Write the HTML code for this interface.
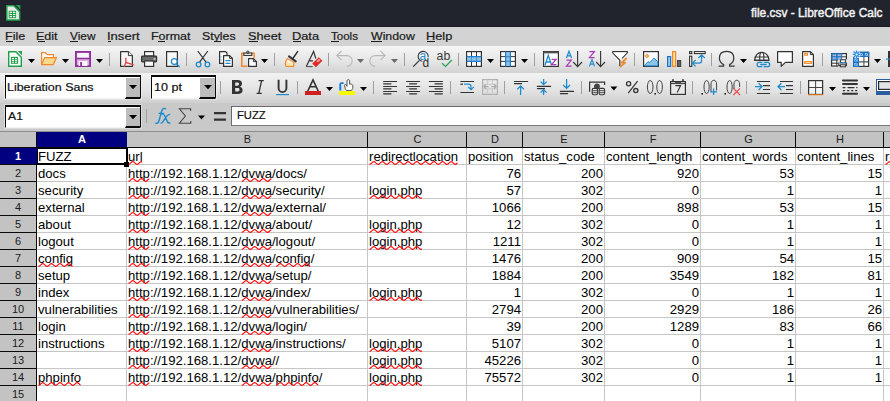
<!DOCTYPE html>
<html><head><meta charset="utf-8">
<style>
*{margin:0;padding:0;box-sizing:border-box}
html,body{width:890px;height:401px;overflow:hidden;background:#fff}
body{position:relative;font-family:"Liberation Sans",sans-serif}
.a{position:absolute}
.t{position:absolute;white-space:nowrap}
.menu{position:absolute;top:29px;font-size:12px;color:#1a1a1a;line-height:14px}
.menu u{text-decoration:none;border-bottom:1px solid #1a1a1a}
.cell{position:absolute;font-size:13.15px;line-height:16px;white-space:nowrap;color:#000;overflow:visible}
.num{text-align:right}
.rh{position:absolute;left:0;width:36px;height:16px;text-align:center;font-size:12px;line-height:16px;color:#222;background:#c0c0c0}
.ch{position:absolute;top:131px;height:16px;text-align:center;font-size:12px;line-height:16px;color:#222;background:#c0c0c0}
</style></head><body>

<div class="a" style="left:0;top:0;width:890px;height:27px;background:#21242d"></div>
<div class="a" style="left:0;top:26px;width:890px;height:1px;background:#17191f"></div>
<div class="t" style="left:751.30px;top:3px;font-size:12px;font-weight:normal;line-height:20px;color:#f2f2f2;transform:scaleX(0.9924);transform-origin:0 0;-webkit-text-stroke:0.45px #f2f2f2">file.csv - LibreOffice Calc</div>
<div class="a" style="left:0;top:27px;width:890px;height:19px;background:#d3d3d3"></div>
<div class="t" style="left:5.06px;top:26px;font-size:11px;font-weight:normal;line-height:20px;color:#1a1a1a;transform:scaleX(1.1438);transform-origin:0 0;-webkit-text-stroke:0.2px #1a1a1a">File</div>
<div class="a" style="left:6px;top:41px;width:7px;height:1px;background:#1a1a1a"></div>
<div class="t" style="left:36.36px;top:26px;font-size:11px;font-weight:normal;line-height:20px;color:#1a1a1a;transform:scaleX(1.1389);transform-origin:0 0;-webkit-text-stroke:0.2px #1a1a1a">Edit</div>
<div class="a" style="left:38px;top:41px;width:7px;height:1px;background:#1a1a1a"></div>
<div class="t" style="left:69.80px;top:26px;font-size:11px;font-weight:normal;line-height:20px;color:#1a1a1a;transform:scaleX(1.0750);transform-origin:0 0;-webkit-text-stroke:0.2px #1a1a1a">View</div>
<div class="a" style="left:70px;top:41px;width:8px;height:1px;background:#1a1a1a"></div>
<div class="t" style="left:106.81px;top:26px;font-size:11px;font-weight:normal;line-height:20px;color:#1a1a1a;transform:scaleX(1.1852);transform-origin:0 0;-webkit-text-stroke:0.2px #1a1a1a">Insert</div>
<div class="a" style="left:108px;top:41px;width:3px;height:1px;background:#1a1a1a"></div>
<div class="t" style="left:151.37px;top:26px;font-size:11px;font-weight:normal;line-height:20px;color:#1a1a1a;transform:scaleX(1.1324);transform-origin:0 0;-webkit-text-stroke:0.2px #1a1a1a">Format</div>
<div class="a" style="left:158px;top:41px;width:7px;height:1px;background:#1a1a1a"></div>
<div class="t" style="left:202.28px;top:26px;font-size:11px;font-weight:normal;line-height:20px;color:#1a1a1a;transform:scaleX(1.1241);transform-origin:0 0;-webkit-text-stroke:0.2px #1a1a1a">Styles</div>
<div class="a" style="left:214px;top:41px;width:7px;height:1px;background:#1a1a1a"></div>
<div class="t" style="left:247.84px;top:26px;font-size:11px;font-weight:normal;line-height:20px;color:#1a1a1a;transform:scaleX(1.1607);transform-origin:0 0;-webkit-text-stroke:0.2px #1a1a1a">Sheet</div>
<div class="a" style="left:249px;top:41px;width:9px;height:1px;background:#1a1a1a"></div>
<div class="t" style="left:291.64px;top:26px;font-size:11px;font-weight:normal;line-height:20px;color:#1a1a1a;transform:scaleX(1.1636);transform-origin:0 0;-webkit-text-stroke:0.2px #1a1a1a">Data</div>
<div class="a" style="left:293px;top:41px;width:8px;height:1px;background:#1a1a1a"></div>
<div class="t" style="left:331.00px;top:26px;font-size:11px;font-weight:normal;line-height:20px;color:#1a1a1a;transform:scaleX(1.0500);transform-origin:0 0;-webkit-text-stroke:0.2px #1a1a1a">Tools</div>
<div class="a" style="left:331px;top:41px;width:8px;height:1px;background:#1a1a1a"></div>
<div class="t" style="left:371.00px;top:26px;font-size:11px;font-weight:normal;line-height:20px;color:#1a1a1a;transform:scaleX(1.1205);transform-origin:0 0;-webkit-text-stroke:0.2px #1a1a1a">Window</div>
<div class="a" style="left:371px;top:41px;width:11px;height:1px;background:#1a1a1a"></div>
<div class="t" style="left:425.84px;top:26px;font-size:11px;font-weight:normal;line-height:20px;color:#1a1a1a;transform:scaleX(1.1619);transform-origin:0 0;-webkit-text-stroke:0.2px #1a1a1a">Help</div>
<div class="a" style="left:427px;top:41px;width:8px;height:1px;background:#1a1a1a"></div>
<div class="a" style="left:0;top:46px;width:890px;height:27px;background:linear-gradient(#f6f6f6,#e4e4e4 60%,#d2d2d2)"></div>
<div class="a" style="left:0;top:73px;width:890px;height:30px;background:linear-gradient(#f2f2f2,#e2e2e2 60%,#cfcfcf)"></div>
<div class="a" style="left:0;top:103px;width:890px;height:28px;background:#c9c9c9"></div>
<div class="a" style="left:4px;top:74px;width:138px;height:26px;background:rgba(255,255,255,0.35)"></div>
<div class="a" style="left:5px;top:75px;width:136px;height:24px;background:#fff;border-top:2px solid #0a0a0a;border-left:1px solid #0a0a0a;border-right:1px solid #0a0a0a;border-bottom:1px solid #f2f2f2"></div>
<div class="a" style="left:125px;top:77px;width:15px;height:22px;background:#bdbdbd;border-left:1px solid #fff;border-top:1px solid #fff;border-bottom:2px solid #0a0a0a"></div>
<svg class="a" style="left:129.0px;top:85.0px" width="8" height="5"><path d="M0 0H8L4 4.2Z" fill="#000"/></svg>
<div class="t" style="left:7.27px;top:77px;font-size:11px;font-weight:normal;line-height:20px;color:#111;transform:scaleX(1.1320);transform-origin:0 0;-webkit-text-stroke:0.2px #111">Liberation Sans</div>
<div class="a" style="left:150px;top:74px;width:67px;height:26px;background:rgba(255,255,255,0.35)"></div>
<div class="a" style="left:151px;top:75px;width:65px;height:24px;background:#fff;border-top:2px solid #0a0a0a;border-left:1px solid #0a0a0a;border-right:1px solid #0a0a0a;border-bottom:1px solid #f2f2f2"></div>
<div class="a" style="left:199px;top:77px;width:16px;height:22px;background:#bdbdbd;border-left:1px solid #fff;border-top:1px solid #fff;border-bottom:2px solid #0a0a0a"></div>
<svg class="a" style="left:203.5px;top:85.0px" width="8" height="5"><path d="M0 0H8L4 4.2Z" fill="#000"/></svg>
<div class="t" style="left:154.45px;top:77px;font-size:11px;font-weight:normal;line-height:20px;color:#111;transform:scaleX(1.1458);transform-origin:0 0;-webkit-text-stroke:0.2px #111">10 pt</div>
<div class="a" style="left:4px;top:104px;width:138px;height:25px;background:rgba(255,255,255,0.35)"></div>
<div class="a" style="left:5px;top:105px;width:136px;height:23px;background:#fff;border-top:2px solid #0a0a0a;border-left:1px solid #0a0a0a;border-right:1px solid #0a0a0a;border-bottom:1px solid #f2f2f2"></div>
<div class="a" style="left:125px;top:107px;width:15px;height:21px;background:#bdbdbd;border-left:1px solid #fff;border-top:1px solid #fff;border-bottom:2px solid #0a0a0a"></div>
<svg class="a" style="left:129.0px;top:114.5px" width="8" height="5"><path d="M0 0H8L4 4.2Z" fill="#000"/></svg>
<div class="t" style="left:7.80px;top:106px;font-size:11px;font-weight:normal;line-height:20px;color:#111;transform:scaleX(1.1077);transform-origin:0 0;-webkit-text-stroke:0.2px #111">A1</div>
<div class="a" style="left:231px;top:106px;width:659px;height:20px;background:#fff;border-top:1px solid #6a6a6a;border-left:1px solid #6a6a6a;border-bottom:1px solid #7a7a7a"></div>
<div class="t" style="left:236.58px;top:105px;font-size:11px;font-weight:normal;line-height:20px;color:#111;transform:scaleX(1.0185);transform-origin:0 0;-webkit-text-stroke:0.2px #111">FUZZ</div>
<div class="a" style="left:0;top:131px;width:890px;height:1px;background:#8e8e8e"></div>
<div class="a" style="left:0;top:132px;width:890px;height:15px;background:#c3c3c3"></div>
<div class="a" style="left:0;top:147px;width:36px;height:254px;background:#c3c3c3"></div>
<div class="a" style="left:36px;top:147px;width:854px;height:1px;background:#c6c6c6"></div>
<div class="a" style="left:36px;top:164px;width:854px;height:1px;background:#c6c6c6"></div>
<div class="a" style="left:36px;top:181px;width:854px;height:1px;background:#c6c6c6"></div>
<div class="a" style="left:36px;top:198px;width:854px;height:1px;background:#c6c6c6"></div>
<div class="a" style="left:36px;top:215px;width:854px;height:1px;background:#c6c6c6"></div>
<div class="a" style="left:36px;top:232px;width:854px;height:1px;background:#c6c6c6"></div>
<div class="a" style="left:36px;top:249px;width:854px;height:1px;background:#c6c6c6"></div>
<div class="a" style="left:36px;top:266px;width:854px;height:1px;background:#c6c6c6"></div>
<div class="a" style="left:36px;top:283px;width:854px;height:1px;background:#c6c6c6"></div>
<div class="a" style="left:36px;top:300px;width:854px;height:1px;background:#c6c6c6"></div>
<div class="a" style="left:36px;top:317px;width:854px;height:1px;background:#c6c6c6"></div>
<div class="a" style="left:36px;top:334px;width:854px;height:1px;background:#c6c6c6"></div>
<div class="a" style="left:36px;top:351px;width:854px;height:1px;background:#c6c6c6"></div>
<div class="a" style="left:36px;top:368px;width:854px;height:1px;background:#c6c6c6"></div>
<div class="a" style="left:36px;top:385px;width:854px;height:1px;background:#c6c6c6"></div>
<div class="a" style="left:36px;top:147px;width:1px;height:254px;background:#c6c6c6"></div>
<div class="a" style="left:126px;top:147px;width:1px;height:254px;background:#c6c6c6"></div>
<div class="a" style="left:367px;top:147px;width:1px;height:254px;background:#c6c6c6"></div>
<div class="a" style="left:466px;top:147px;width:1px;height:254px;background:#c6c6c6"></div>
<div class="a" style="left:522px;top:147px;width:1px;height:254px;background:#c6c6c6"></div>
<div class="a" style="left:604px;top:147px;width:1px;height:254px;background:#c6c6c6"></div>
<div class="a" style="left:700px;top:147px;width:1px;height:254px;background:#c6c6c6"></div>
<div class="a" style="left:795px;top:147px;width:1px;height:254px;background:#c6c6c6"></div>
<div class="a" style="left:883px;top:147px;width:1px;height:254px;background:#c6c6c6"></div>
<div class="a" style="left:0;top:147px;width:890px;height:1px;background:#0a0a0a"></div>
<div class="a" style="left:36px;top:132px;width:1px;height:269px;background:#0a0a0a"></div>
<div class="a" style="left:126px;top:132px;width:1px;height:15px;background:#0a0a0a"></div>
<div class="a" style="left:367px;top:132px;width:1px;height:15px;background:#0a0a0a"></div>
<div class="a" style="left:466px;top:132px;width:1px;height:15px;background:#0a0a0a"></div>
<div class="a" style="left:522px;top:132px;width:1px;height:15px;background:#0a0a0a"></div>
<div class="a" style="left:604px;top:132px;width:1px;height:15px;background:#0a0a0a"></div>
<div class="a" style="left:700px;top:132px;width:1px;height:15px;background:#0a0a0a"></div>
<div class="a" style="left:795px;top:132px;width:1px;height:15px;background:#0a0a0a"></div>
<div class="a" style="left:883px;top:132px;width:1px;height:15px;background:#0a0a0a"></div>
<div class="a" style="left:0;top:164px;width:36px;height:1px;background:#0a0a0a"></div>
<div class="a" style="left:0;top:181px;width:36px;height:1px;background:#0a0a0a"></div>
<div class="a" style="left:0;top:198px;width:36px;height:1px;background:#0a0a0a"></div>
<div class="a" style="left:0;top:215px;width:36px;height:1px;background:#0a0a0a"></div>
<div class="a" style="left:0;top:232px;width:36px;height:1px;background:#0a0a0a"></div>
<div class="a" style="left:0;top:249px;width:36px;height:1px;background:#0a0a0a"></div>
<div class="a" style="left:0;top:266px;width:36px;height:1px;background:#0a0a0a"></div>
<div class="a" style="left:0;top:283px;width:36px;height:1px;background:#0a0a0a"></div>
<div class="a" style="left:0;top:300px;width:36px;height:1px;background:#0a0a0a"></div>
<div class="a" style="left:0;top:317px;width:36px;height:1px;background:#0a0a0a"></div>
<div class="a" style="left:0;top:334px;width:36px;height:1px;background:#0a0a0a"></div>
<div class="a" style="left:0;top:351px;width:36px;height:1px;background:#0a0a0a"></div>
<div class="a" style="left:0;top:368px;width:36px;height:1px;background:#0a0a0a"></div>
<div class="a" style="left:0;top:385px;width:36px;height:1px;background:#0a0a0a"></div>
<div class="a" style="left:37px;top:132px;width:90px;height:15px;background:#000080"></div>
<div class="a" style="left:0;top:148px;width:37px;height:16px;background:#000080"></div>
<div class="t" style="left:37px;top:130px;width:90px;text-align:center;font-size:11px;line-height:18px;color:#fff;font-weight:bold">A</div>
<div class="t" style="left:127px;top:130px;width:241px;text-align:center;font-size:11px;line-height:18px;color:#1a1a1a">B</div>
<div class="t" style="left:368px;top:130px;width:99px;text-align:center;font-size:11px;line-height:18px;color:#1a1a1a">C</div>
<div class="t" style="left:467px;top:130px;width:56px;text-align:center;font-size:11px;line-height:18px;color:#1a1a1a">D</div>
<div class="t" style="left:523px;top:130px;width:82px;text-align:center;font-size:11px;line-height:18px;color:#1a1a1a">E</div>
<div class="t" style="left:605px;top:130px;width:96px;text-align:center;font-size:11px;line-height:18px;color:#1a1a1a">F</div>
<div class="t" style="left:701px;top:130px;width:95px;text-align:center;font-size:11px;line-height:18px;color:#1a1a1a">G</div>
<div class="t" style="left:796px;top:130px;width:88px;text-align:center;font-size:11px;line-height:18px;color:#1a1a1a">H</div>
<div class="t" style="left:884px;top:130px;width:87px;text-align:center;font-size:11px;line-height:18px;color:#1a1a1a">I</div>
<div class="t" style="left:0px;top:148px;width:36px;text-align:center;font-size:11px;line-height:17px;color:#fff;font-weight:bold">1</div>
<div class="t" style="left:0px;top:165px;width:36px;text-align:center;font-size:11px;line-height:17px;color:#1a1a1a">2</div>
<div class="t" style="left:0px;top:182px;width:36px;text-align:center;font-size:11px;line-height:17px;color:#1a1a1a">3</div>
<div class="t" style="left:0px;top:199px;width:36px;text-align:center;font-size:11px;line-height:17px;color:#1a1a1a">4</div>
<div class="t" style="left:0px;top:216px;width:36px;text-align:center;font-size:11px;line-height:17px;color:#1a1a1a">5</div>
<div class="t" style="left:0px;top:233px;width:36px;text-align:center;font-size:11px;line-height:17px;color:#1a1a1a">6</div>
<div class="t" style="left:0px;top:250px;width:36px;text-align:center;font-size:11px;line-height:17px;color:#1a1a1a">7</div>
<div class="t" style="left:0px;top:267px;width:36px;text-align:center;font-size:11px;line-height:17px;color:#1a1a1a">8</div>
<div class="t" style="left:0px;top:284px;width:36px;text-align:center;font-size:11px;line-height:17px;color:#1a1a1a">9</div>
<div class="t" style="left:0px;top:301px;width:36px;text-align:center;font-size:11px;line-height:17px;color:#1a1a1a">10</div>
<div class="t" style="left:0px;top:318px;width:36px;text-align:center;font-size:11px;line-height:17px;color:#1a1a1a">11</div>
<div class="t" style="left:0px;top:335px;width:36px;text-align:center;font-size:11px;line-height:17px;color:#1a1a1a">12</div>
<div class="t" style="left:0px;top:352px;width:36px;text-align:center;font-size:11px;line-height:17px;color:#1a1a1a">13</div>
<div class="t" style="left:0px;top:369px;width:36px;text-align:center;font-size:11px;line-height:17px;color:#1a1a1a">14</div>
<div class="t" style="left:0px;top:386px;width:36px;text-align:center;font-size:11px;line-height:17px;color:#1a1a1a">15</div>
<div class="cell" style="left:38px;top:149px">FUZZ</div>
<div class="cell" style="left:128px;top:149px"><span class="sp">url</span></div>
<div class="cell" style="left:369px;top:149px"><span class="sp">redirectlocation</span></div>
<div class="cell" style="left:468px;top:149px">position</div>
<div class="cell" style="left:524px;top:149px">status_code</div>
<div class="cell" style="left:606px;top:149px">content_length</div>
<div class="cell" style="left:702px;top:149px">content_words</div>
<div class="cell" style="left:797px;top:149px">content_lines</div>
<div class="cell" style="left:38px;top:166px">docs</div>
<div class="cell" style="left:128px;top:166px"><span class="sp">http</span>://192.168.1.12/<span class="sp">dvwa</span>/docs/</div>
<div class="cell num" style="left:466px;top:166px;width:55px">76</div>
<div class="cell num" style="left:522px;top:166px;width:81px">200</div>
<div class="cell num" style="left:604px;top:166px;width:95px">920</div>
<div class="cell num" style="left:700px;top:166px;width:94px">53</div>
<div class="cell num" style="left:795px;top:166px;width:87px">15</div>
<div class="cell" style="left:38px;top:183px">security</div>
<div class="cell" style="left:128px;top:183px"><span class="sp">http</span>://192.168.1.12/<span class="sp">dvwa</span>/security/</div>
<div class="cell" style="left:369px;top:183px"><span class="sp">login.php</span></div>
<div class="cell num" style="left:466px;top:183px;width:55px">57</div>
<div class="cell num" style="left:522px;top:183px;width:81px">302</div>
<div class="cell num" style="left:604px;top:183px;width:95px">0</div>
<div class="cell num" style="left:700px;top:183px;width:94px">1</div>
<div class="cell num" style="left:795px;top:183px;width:87px">1</div>
<div class="cell" style="left:38px;top:200px">external</div>
<div class="cell" style="left:128px;top:200px"><span class="sp">http</span>://192.168.1.12/<span class="sp">dvwa</span>/external/</div>
<div class="cell num" style="left:466px;top:200px;width:55px">1066</div>
<div class="cell num" style="left:522px;top:200px;width:81px">200</div>
<div class="cell num" style="left:604px;top:200px;width:95px">898</div>
<div class="cell num" style="left:700px;top:200px;width:94px">53</div>
<div class="cell num" style="left:795px;top:200px;width:87px">15</div>
<div class="cell" style="left:38px;top:217px">about</div>
<div class="cell" style="left:128px;top:217px"><span class="sp">http</span>://192.168.1.12/<span class="sp">dvwa</span>/about/</div>
<div class="cell" style="left:369px;top:217px"><span class="sp">login.php</span></div>
<div class="cell num" style="left:466px;top:217px;width:55px">12</div>
<div class="cell num" style="left:522px;top:217px;width:81px">302</div>
<div class="cell num" style="left:604px;top:217px;width:95px">0</div>
<div class="cell num" style="left:700px;top:217px;width:94px">1</div>
<div class="cell num" style="left:795px;top:217px;width:87px">1</div>
<div class="cell" style="left:38px;top:234px">logout</div>
<div class="cell" style="left:128px;top:234px"><span class="sp">http</span>://192.168.1.12/<span class="sp">dvwa</span>/logout/</div>
<div class="cell" style="left:369px;top:234px"><span class="sp">login.php</span></div>
<div class="cell num" style="left:466px;top:234px;width:55px">1211</div>
<div class="cell num" style="left:522px;top:234px;width:81px">302</div>
<div class="cell num" style="left:604px;top:234px;width:95px">0</div>
<div class="cell num" style="left:700px;top:234px;width:94px">1</div>
<div class="cell num" style="left:795px;top:234px;width:87px">1</div>
<div class="cell" style="left:38px;top:251px"><span class="sp">config</span></div>
<div class="cell" style="left:128px;top:251px"><span class="sp">http</span>://192.168.1.12/<span class="sp">dvwa</span>/<span class="sp">config</span>/</div>
<div class="cell num" style="left:466px;top:251px;width:55px">1476</div>
<div class="cell num" style="left:522px;top:251px;width:81px">200</div>
<div class="cell num" style="left:604px;top:251px;width:95px">909</div>
<div class="cell num" style="left:700px;top:251px;width:94px">54</div>
<div class="cell num" style="left:795px;top:251px;width:87px">15</div>
<div class="cell" style="left:38px;top:268px">setup</div>
<div class="cell" style="left:128px;top:268px"><span class="sp">http</span>://192.168.1.12/<span class="sp">dvwa</span>/setup/</div>
<div class="cell num" style="left:466px;top:268px;width:55px">1884</div>
<div class="cell num" style="left:522px;top:268px;width:81px">200</div>
<div class="cell num" style="left:604px;top:268px;width:95px">3549</div>
<div class="cell num" style="left:700px;top:268px;width:94px">182</div>
<div class="cell num" style="left:795px;top:268px;width:87px">81</div>
<div class="cell" style="left:38px;top:285px">index</div>
<div class="cell" style="left:128px;top:285px"><span class="sp">http</span>://192.168.1.12/<span class="sp">dvwa</span>/index/</div>
<div class="cell" style="left:369px;top:285px"><span class="sp">login.php</span></div>
<div class="cell num" style="left:466px;top:285px;width:55px">1</div>
<div class="cell num" style="left:522px;top:285px;width:81px">302</div>
<div class="cell num" style="left:604px;top:285px;width:95px">0</div>
<div class="cell num" style="left:700px;top:285px;width:94px">1</div>
<div class="cell num" style="left:795px;top:285px;width:87px">1</div>
<div class="cell" style="left:38px;top:302px">vulnerabilities</div>
<div class="cell" style="left:128px;top:302px"><span class="sp">http</span>://192.168.1.12/<span class="sp">dvwa</span>/vulnerabilities/</div>
<div class="cell num" style="left:466px;top:302px;width:55px">2794</div>
<div class="cell num" style="left:522px;top:302px;width:81px">200</div>
<div class="cell num" style="left:604px;top:302px;width:95px">2929</div>
<div class="cell num" style="left:700px;top:302px;width:94px">186</div>
<div class="cell num" style="left:795px;top:302px;width:87px">26</div>
<div class="cell" style="left:38px;top:319px">login</div>
<div class="cell" style="left:128px;top:319px"><span class="sp">http</span>://192.168.1.12/<span class="sp">dvwa</span>/login/</div>
<div class="cell num" style="left:466px;top:319px;width:55px">39</div>
<div class="cell num" style="left:522px;top:319px;width:81px">200</div>
<div class="cell num" style="left:604px;top:319px;width:95px">1289</div>
<div class="cell num" style="left:700px;top:319px;width:94px">83</div>
<div class="cell num" style="left:795px;top:319px;width:87px">66</div>
<div class="cell" style="left:38px;top:336px">instructions</div>
<div class="cell" style="left:128px;top:336px"><span class="sp">http</span>://192.168.1.12/<span class="sp">dvwa</span>/instructions/</div>
<div class="cell" style="left:369px;top:336px"><span class="sp">login.php</span></div>
<div class="cell num" style="left:466px;top:336px;width:55px">5107</div>
<div class="cell num" style="left:522px;top:336px;width:81px">302</div>
<div class="cell num" style="left:604px;top:336px;width:95px">0</div>
<div class="cell num" style="left:700px;top:336px;width:94px">1</div>
<div class="cell num" style="left:795px;top:336px;width:87px">1</div>
<div class="cell" style="left:128px;top:353px"><span class="sp">http</span>://192.168.1.12/<span class="sp">dvwa</span>//</div>
<div class="cell" style="left:369px;top:353px"><span class="sp">login.php</span></div>
<div class="cell num" style="left:466px;top:353px;width:55px">45226</div>
<div class="cell num" style="left:522px;top:353px;width:81px">302</div>
<div class="cell num" style="left:604px;top:353px;width:95px">0</div>
<div class="cell num" style="left:700px;top:353px;width:94px">1</div>
<div class="cell num" style="left:795px;top:353px;width:87px">1</div>
<div class="cell" style="left:38px;top:370px"><span class="sp">phpinfo</span></div>
<div class="cell" style="left:128px;top:370px"><span class="sp">http</span>://192.168.1.12/<span class="sp">dvwa</span>/<span class="sp">phpinfo</span>/</div>
<div class="cell" style="left:369px;top:370px"><span class="sp">login.php</span></div>
<div class="cell num" style="left:466px;top:370px;width:55px">75572</div>
<div class="cell num" style="left:522px;top:370px;width:81px">302</div>
<div class="cell num" style="left:604px;top:370px;width:95px">0</div>
<div class="cell num" style="left:700px;top:370px;width:94px">1</div>
<div class="cell num" style="left:795px;top:370px;width:87px">1</div>
<div class="cell" style="left:885px;top:149px"><span class="sp">redirectchain</span></div>
<div class="a" style="left:37px;top:148px;width:91px;height:17px;border-top:1px solid #000;border-left:1px solid #000;border-right:2px solid #000;border-bottom:2px solid #000"></div>
<div class="a" style="left:124px;top:162px;width:5px;height:5px;background:#000"></div>
<svg class="a" style="left:0;top:0" width="890" height="401">
<path d="M128.50 164.40 C130.65 164.40 130.65 161.60 132.80 161.60 C134.95 161.60 134.95 164.40 137.10 164.40 C139.25 164.40 139.25 161.60 141.40 161.60 C141.75 161.60 141.75 162.06 142.11 162.06" fill="none" stroke="#ff0000" stroke-width="1.2"/>
<path d="M369.50 164.40 C371.65 164.40 371.65 161.60 373.80 161.60 C375.95 161.60 375.95 164.40 378.10 164.40 C380.25 164.40 380.25 161.60 382.40 161.60 C384.55 161.60 384.55 164.40 386.70 164.40 C388.85 164.40 388.85 161.60 391.00 161.60 C393.15 161.60 393.15 164.40 395.30 164.40 C397.45 164.40 397.45 161.60 399.60 161.60 C401.75 161.60 401.75 164.40 403.90 164.40 C406.05 164.40 406.05 161.60 408.20 161.60 C410.35 161.60 410.35 164.40 412.50 164.40 C414.65 164.40 414.65 161.60 416.80 161.60 C418.95 161.60 418.95 164.40 421.10 164.40 C423.25 164.40 423.25 161.60 425.40 161.60 C427.55 161.60 427.55 164.40 429.70 164.40 C431.85 164.40 431.85 161.60 434.00 161.60 C436.15 161.60 436.15 164.40 438.30 164.40 C440.45 164.40 440.45 161.60 442.60 161.60 C444.75 161.60 444.75 164.40 446.90 164.40 C449.05 164.40 449.05 161.60 451.20 161.60 C453.35 161.60 453.35 164.40 455.50 164.40 C456.56 164.40 456.56 163.02 457.62 163.02" fill="none" stroke="#ff0000" stroke-width="1.2"/>
<path d="M128.50 181.40 C130.65 181.40 130.65 178.60 132.80 178.60 C134.95 178.60 134.95 181.40 137.10 181.40 C139.25 181.40 139.25 178.60 141.40 178.60 C143.55 178.60 143.55 181.40 145.70 181.40 C147.56 181.40 147.56 178.98 149.42 178.98" fill="none" stroke="#ff0000" stroke-width="1.2"/>
<path d="M241.77 181.40 C243.92 181.40 243.92 178.60 246.07 178.60 C248.22 178.60 248.22 181.40 250.37 181.40 C252.52 181.40 252.52 178.60 254.67 178.60 C256.82 178.60 256.82 181.40 258.97 181.40 C261.12 181.40 261.12 178.60 263.27 178.60 C265.42 178.60 265.42 181.40 267.57 181.40 C269.51 181.40 269.51 178.87 271.45 178.87" fill="none" stroke="#ff0000" stroke-width="1.2"/>
<path d="M128.50 198.40 C130.65 198.40 130.65 195.60 132.80 195.60 C134.95 195.60 134.95 198.40 137.10 198.40 C139.25 198.40 139.25 195.60 141.40 195.60 C143.55 195.60 143.55 198.40 145.70 198.40 C147.56 198.40 147.56 195.98 149.42 195.98" fill="none" stroke="#ff0000" stroke-width="1.2"/>
<path d="M241.77 198.40 C243.92 198.40 243.92 195.60 246.07 195.60 C248.22 195.60 248.22 198.40 250.37 198.40 C252.52 198.40 252.52 195.60 254.67 195.60 C256.82 195.60 256.82 198.40 258.97 198.40 C261.12 198.40 261.12 195.60 263.27 195.60 C265.42 195.60 265.42 198.40 267.57 198.40 C269.51 198.40 269.51 195.87 271.45 195.87" fill="none" stroke="#ff0000" stroke-width="1.2"/>
<path d="M369.50 198.40 C371.65 198.40 371.65 195.60 373.80 195.60 C375.95 195.60 375.95 198.40 378.10 198.40 C380.25 198.40 380.25 195.60 382.40 195.60 C384.55 195.60 384.55 198.40 386.70 198.40 C388.85 198.40 388.85 195.60 391.00 195.60 C393.15 195.60 393.15 198.40 395.30 198.40 C397.45 198.40 397.45 195.60 399.60 195.60 C401.75 195.60 401.75 198.40 403.90 198.40 C406.05 198.40 406.05 195.60 408.20 195.60 C410.35 195.60 410.35 198.40 412.50 198.40 C414.65 198.40 414.65 195.60 416.80 195.60 C418.95 195.60 418.95 198.40 421.10 198.40 C421.47 198.40 421.47 197.92 421.84 197.92" fill="none" stroke="#ff0000" stroke-width="1.2"/>
<path d="M128.50 215.40 C130.65 215.40 130.65 212.60 132.80 212.60 C134.95 212.60 134.95 215.40 137.10 215.40 C139.25 215.40 139.25 212.60 141.40 212.60 C143.55 212.60 143.55 215.40 145.70 215.40 C147.56 215.40 147.56 212.98 149.42 212.98" fill="none" stroke="#ff0000" stroke-width="1.2"/>
<path d="M241.77 215.40 C243.92 215.40 243.92 212.60 246.07 212.60 C248.22 212.60 248.22 215.40 250.37 215.40 C252.52 215.40 252.52 212.60 254.67 212.60 C256.82 212.60 256.82 215.40 258.97 215.40 C261.12 215.40 261.12 212.60 263.27 212.60 C265.42 212.60 265.42 215.40 267.57 215.40 C269.51 215.40 269.51 212.87 271.45 212.87" fill="none" stroke="#ff0000" stroke-width="1.2"/>
<path d="M128.50 232.40 C130.65 232.40 130.65 229.60 132.80 229.60 C134.95 229.60 134.95 232.40 137.10 232.40 C139.25 232.40 139.25 229.60 141.40 229.60 C143.55 229.60 143.55 232.40 145.70 232.40 C147.56 232.40 147.56 229.98 149.42 229.98" fill="none" stroke="#ff0000" stroke-width="1.2"/>
<path d="M241.77 232.40 C243.92 232.40 243.92 229.60 246.07 229.60 C248.22 229.60 248.22 232.40 250.37 232.40 C252.52 232.40 252.52 229.60 254.67 229.60 C256.82 229.60 256.82 232.40 258.97 232.40 C261.12 232.40 261.12 229.60 263.27 229.60 C265.42 229.60 265.42 232.40 267.57 232.40 C269.51 232.40 269.51 229.87 271.45 229.87" fill="none" stroke="#ff0000" stroke-width="1.2"/>
<path d="M369.50 232.40 C371.65 232.40 371.65 229.60 373.80 229.60 C375.95 229.60 375.95 232.40 378.10 232.40 C380.25 232.40 380.25 229.60 382.40 229.60 C384.55 229.60 384.55 232.40 386.70 232.40 C388.85 232.40 388.85 229.60 391.00 229.60 C393.15 229.60 393.15 232.40 395.30 232.40 C397.45 232.40 397.45 229.60 399.60 229.60 C401.75 229.60 401.75 232.40 403.90 232.40 C406.05 232.40 406.05 229.60 408.20 229.60 C410.35 229.60 410.35 232.40 412.50 232.40 C414.65 232.40 414.65 229.60 416.80 229.60 C418.95 229.60 418.95 232.40 421.10 232.40 C421.47 232.40 421.47 231.92 421.84 231.92" fill="none" stroke="#ff0000" stroke-width="1.2"/>
<path d="M128.50 249.40 C130.65 249.40 130.65 246.60 132.80 246.60 C134.95 246.60 134.95 249.40 137.10 249.40 C139.25 249.40 139.25 246.60 141.40 246.60 C143.55 246.60 143.55 249.40 145.70 249.40 C147.56 249.40 147.56 246.98 149.42 246.98" fill="none" stroke="#ff0000" stroke-width="1.2"/>
<path d="M241.77 249.40 C243.92 249.40 243.92 246.60 246.07 246.60 C248.22 246.60 248.22 249.40 250.37 249.40 C252.52 249.40 252.52 246.60 254.67 246.60 C256.82 246.60 256.82 249.40 258.97 249.40 C261.12 249.40 261.12 246.60 263.27 246.60 C265.42 246.60 265.42 249.40 267.57 249.40 C269.51 249.40 269.51 246.87 271.45 246.87" fill="none" stroke="#ff0000" stroke-width="1.2"/>
<path d="M369.50 249.40 C371.65 249.40 371.65 246.60 373.80 246.60 C375.95 246.60 375.95 249.40 378.10 249.40 C380.25 249.40 380.25 246.60 382.40 246.60 C384.55 246.60 384.55 249.40 386.70 249.40 C388.85 249.40 388.85 246.60 391.00 246.60 C393.15 246.60 393.15 249.40 395.30 249.40 C397.45 249.40 397.45 246.60 399.60 246.60 C401.75 246.60 401.75 249.40 403.90 249.40 C406.05 249.40 406.05 246.60 408.20 246.60 C410.35 246.60 410.35 249.40 412.50 249.40 C414.65 249.40 414.65 246.60 416.80 246.60 C418.95 246.60 418.95 249.40 421.10 249.40 C421.47 249.40 421.47 248.92 421.84 248.92" fill="none" stroke="#ff0000" stroke-width="1.2"/>
<path d="M38.50 266.40 C40.65 266.40 40.65 263.60 42.80 263.60 C44.95 263.60 44.95 266.40 47.10 266.40 C49.25 266.40 49.25 263.60 51.40 263.60 C53.55 263.60 53.55 266.40 55.70 266.40 C57.85 266.40 57.85 263.60 60.00 263.60 C62.15 263.60 62.15 266.40 64.30 266.40 C66.45 266.40 66.45 263.60 68.60 263.60 C70.59 263.60 70.59 266.19 72.58 266.19" fill="none" stroke="#ff0000" stroke-width="1.2"/>
<path d="M128.50 266.40 C130.65 266.40 130.65 263.60 132.80 263.60 C134.95 263.60 134.95 266.40 137.10 266.40 C139.25 266.40 139.25 263.60 141.40 263.60 C143.55 263.60 143.55 266.40 145.70 266.40 C147.56 266.40 147.56 263.98 149.42 263.98" fill="none" stroke="#ff0000" stroke-width="1.2"/>
<path d="M241.77 266.40 C243.92 266.40 243.92 263.60 246.07 263.60 C248.22 263.60 248.22 266.40 250.37 266.40 C252.52 266.40 252.52 263.60 254.67 263.60 C256.82 263.60 256.82 266.40 258.97 266.40 C261.12 266.40 261.12 263.60 263.27 263.60 C265.42 263.60 265.42 266.40 267.57 266.40 C269.51 266.40 269.51 263.87 271.45 263.87" fill="none" stroke="#ff0000" stroke-width="1.2"/>
<path d="M276.11 266.40 C278.26 266.40 278.26 263.60 280.41 263.60 C282.56 263.60 282.56 266.40 284.71 266.40 C286.86 266.40 286.86 263.60 289.01 263.60 C291.16 263.60 291.16 266.40 293.31 266.40 C295.46 266.40 295.46 263.60 297.61 263.60 C299.76 263.60 299.76 266.40 301.91 266.40 C304.06 266.40 304.06 263.60 306.21 263.60 C308.20 263.60 308.20 266.19 310.19 266.19" fill="none" stroke="#ff0000" stroke-width="1.2"/>
<path d="M128.50 283.40 C130.65 283.40 130.65 280.60 132.80 280.60 C134.95 280.60 134.95 283.40 137.10 283.40 C139.25 283.40 139.25 280.60 141.40 280.60 C143.55 280.60 143.55 283.40 145.70 283.40 C147.56 283.40 147.56 280.98 149.42 280.98" fill="none" stroke="#ff0000" stroke-width="1.2"/>
<path d="M241.77 283.40 C243.92 283.40 243.92 280.60 246.07 280.60 C248.22 280.60 248.22 283.40 250.37 283.40 C252.52 283.40 252.52 280.60 254.67 280.60 C256.82 280.60 256.82 283.40 258.97 283.40 C261.12 283.40 261.12 280.60 263.27 280.60 C265.42 280.60 265.42 283.40 267.57 283.40 C269.51 283.40 269.51 280.87 271.45 280.87" fill="none" stroke="#ff0000" stroke-width="1.2"/>
<path d="M128.50 300.40 C130.65 300.40 130.65 297.60 132.80 297.60 C134.95 297.60 134.95 300.40 137.10 300.40 C139.25 300.40 139.25 297.60 141.40 297.60 C143.55 297.60 143.55 300.40 145.70 300.40 C147.56 300.40 147.56 297.98 149.42 297.98" fill="none" stroke="#ff0000" stroke-width="1.2"/>
<path d="M241.77 300.40 C243.92 300.40 243.92 297.60 246.07 297.60 C248.22 297.60 248.22 300.40 250.37 300.40 C252.52 300.40 252.52 297.60 254.67 297.60 C256.82 297.60 256.82 300.40 258.97 300.40 C261.12 300.40 261.12 297.60 263.27 297.60 C265.42 297.60 265.42 300.40 267.57 300.40 C269.51 300.40 269.51 297.87 271.45 297.87" fill="none" stroke="#ff0000" stroke-width="1.2"/>
<path d="M369.50 300.40 C371.65 300.40 371.65 297.60 373.80 297.60 C375.95 297.60 375.95 300.40 378.10 300.40 C380.25 300.40 380.25 297.60 382.40 297.60 C384.55 297.60 384.55 300.40 386.70 300.40 C388.85 300.40 388.85 297.60 391.00 297.60 C393.15 297.60 393.15 300.40 395.30 300.40 C397.45 300.40 397.45 297.60 399.60 297.60 C401.75 297.60 401.75 300.40 403.90 300.40 C406.05 300.40 406.05 297.60 408.20 297.60 C410.35 297.60 410.35 300.40 412.50 300.40 C414.65 300.40 414.65 297.60 416.80 297.60 C418.95 297.60 418.95 300.40 421.10 300.40 C421.47 300.40 421.47 299.92 421.84 299.92" fill="none" stroke="#ff0000" stroke-width="1.2"/>
<path d="M128.50 317.40 C130.65 317.40 130.65 314.60 132.80 314.60 C134.95 314.60 134.95 317.40 137.10 317.40 C139.25 317.40 139.25 314.60 141.40 314.60 C143.55 314.60 143.55 317.40 145.70 317.40 C147.56 317.40 147.56 314.98 149.42 314.98" fill="none" stroke="#ff0000" stroke-width="1.2"/>
<path d="M241.77 317.40 C243.92 317.40 243.92 314.60 246.07 314.60 C248.22 314.60 248.22 317.40 250.37 317.40 C252.52 317.40 252.52 314.60 254.67 314.60 C256.82 314.60 256.82 317.40 258.97 317.40 C261.12 317.40 261.12 314.60 263.27 314.60 C265.42 314.60 265.42 317.40 267.57 317.40 C269.51 317.40 269.51 314.87 271.45 314.87" fill="none" stroke="#ff0000" stroke-width="1.2"/>
<path d="M128.50 334.40 C130.65 334.40 130.65 331.60 132.80 331.60 C134.95 331.60 134.95 334.40 137.10 334.40 C139.25 334.40 139.25 331.60 141.40 331.60 C143.55 331.60 143.55 334.40 145.70 334.40 C147.56 334.40 147.56 331.98 149.42 331.98" fill="none" stroke="#ff0000" stroke-width="1.2"/>
<path d="M241.77 334.40 C243.92 334.40 243.92 331.60 246.07 331.60 C248.22 331.60 248.22 334.40 250.37 334.40 C252.52 334.40 252.52 331.60 254.67 331.60 C256.82 331.60 256.82 334.40 258.97 334.40 C261.12 334.40 261.12 331.60 263.27 331.60 C265.42 331.60 265.42 334.40 267.57 334.40 C269.51 334.40 269.51 331.87 271.45 331.87" fill="none" stroke="#ff0000" stroke-width="1.2"/>
<path d="M128.50 351.40 C130.65 351.40 130.65 348.60 132.80 348.60 C134.95 348.60 134.95 351.40 137.10 351.40 C139.25 351.40 139.25 348.60 141.40 348.60 C143.55 348.60 143.55 351.40 145.70 351.40 C147.56 351.40 147.56 348.98 149.42 348.98" fill="none" stroke="#ff0000" stroke-width="1.2"/>
<path d="M241.77 351.40 C243.92 351.40 243.92 348.60 246.07 348.60 C248.22 348.60 248.22 351.40 250.37 351.40 C252.52 351.40 252.52 348.60 254.67 348.60 C256.82 348.60 256.82 351.40 258.97 351.40 C261.12 351.40 261.12 348.60 263.27 348.60 C265.42 348.60 265.42 351.40 267.57 351.40 C269.51 351.40 269.51 348.87 271.45 348.87" fill="none" stroke="#ff0000" stroke-width="1.2"/>
<path d="M369.50 351.40 C371.65 351.40 371.65 348.60 373.80 348.60 C375.95 348.60 375.95 351.40 378.10 351.40 C380.25 351.40 380.25 348.60 382.40 348.60 C384.55 348.60 384.55 351.40 386.70 351.40 C388.85 351.40 388.85 348.60 391.00 348.60 C393.15 348.60 393.15 351.40 395.30 351.40 C397.45 351.40 397.45 348.60 399.60 348.60 C401.75 348.60 401.75 351.40 403.90 351.40 C406.05 351.40 406.05 348.60 408.20 348.60 C410.35 348.60 410.35 351.40 412.50 351.40 C414.65 351.40 414.65 348.60 416.80 348.60 C418.95 348.60 418.95 351.40 421.10 351.40 C421.47 351.40 421.47 350.92 421.84 350.92" fill="none" stroke="#ff0000" stroke-width="1.2"/>
<path d="M128.50 368.40 C130.65 368.40 130.65 365.60 132.80 365.60 C134.95 365.60 134.95 368.40 137.10 368.40 C139.25 368.40 139.25 365.60 141.40 365.60 C143.55 365.60 143.55 368.40 145.70 368.40 C147.56 368.40 147.56 365.98 149.42 365.98" fill="none" stroke="#ff0000" stroke-width="1.2"/>
<path d="M241.77 368.40 C243.92 368.40 243.92 365.60 246.07 365.60 C248.22 365.60 248.22 368.40 250.37 368.40 C252.52 368.40 252.52 365.60 254.67 365.60 C256.82 365.60 256.82 368.40 258.97 368.40 C261.12 368.40 261.12 365.60 263.27 365.60 C265.42 365.60 265.42 368.40 267.57 368.40 C269.51 368.40 269.51 365.87 271.45 365.87" fill="none" stroke="#ff0000" stroke-width="1.2"/>
<path d="M369.50 368.40 C371.65 368.40 371.65 365.60 373.80 365.60 C375.95 365.60 375.95 368.40 378.10 368.40 C380.25 368.40 380.25 365.60 382.40 365.60 C384.55 365.60 384.55 368.40 386.70 368.40 C388.85 368.40 388.85 365.60 391.00 365.60 C393.15 365.60 393.15 368.40 395.30 368.40 C397.45 368.40 397.45 365.60 399.60 365.60 C401.75 365.60 401.75 368.40 403.90 368.40 C406.05 368.40 406.05 365.60 408.20 365.60 C410.35 365.60 410.35 368.40 412.50 368.40 C414.65 368.40 414.65 365.60 416.80 365.60 C418.95 365.60 418.95 368.40 421.10 368.40 C421.47 368.40 421.47 367.92 421.84 367.92" fill="none" stroke="#ff0000" stroke-width="1.2"/>
<path d="M38.50 385.40 C40.65 385.40 40.65 382.60 42.80 382.60 C44.95 382.60 44.95 385.40 47.10 385.40 C49.25 385.40 49.25 382.60 51.40 382.60 C53.55 382.60 53.55 385.40 55.70 385.40 C57.85 385.40 57.85 382.60 60.00 382.60 C62.15 382.60 62.15 385.40 64.30 385.40 C66.45 385.40 66.45 382.60 68.60 382.60 C70.75 382.60 70.75 385.40 72.90 385.40 C75.05 385.40 75.05 382.60 77.20 382.60 C78.91 382.60 78.91 384.83 80.62 384.83" fill="none" stroke="#ff0000" stroke-width="1.2"/>
<path d="M128.50 385.40 C130.65 385.40 130.65 382.60 132.80 382.60 C134.95 382.60 134.95 385.40 137.10 385.40 C139.25 385.40 139.25 382.60 141.40 382.60 C143.55 382.60 143.55 385.40 145.70 385.40 C147.56 385.40 147.56 382.98 149.42 382.98" fill="none" stroke="#ff0000" stroke-width="1.2"/>
<path d="M241.77 385.40 C243.92 385.40 243.92 382.60 246.07 382.60 C248.22 382.60 248.22 385.40 250.37 385.40 C252.52 385.40 252.52 382.60 254.67 382.60 C256.82 382.60 256.82 385.40 258.97 385.40 C261.12 385.40 261.12 382.60 263.27 382.60 C265.42 382.60 265.42 385.40 267.57 385.40 C269.51 385.40 269.51 382.87 271.45 382.87" fill="none" stroke="#ff0000" stroke-width="1.2"/>
<path d="M276.11 385.40 C278.26 385.40 278.26 382.60 280.41 382.60 C282.56 382.60 282.56 385.40 284.71 385.40 C286.86 385.40 286.86 382.60 289.01 382.60 C291.16 382.60 291.16 385.40 293.31 385.40 C295.46 385.40 295.46 382.60 297.61 382.60 C299.76 382.60 299.76 385.40 301.91 385.40 C304.06 385.40 304.06 382.60 306.21 382.60 C308.36 382.60 308.36 385.40 310.51 385.40 C312.66 385.40 312.66 382.60 314.81 382.60 C316.52 382.60 316.52 384.83 318.23 384.83" fill="none" stroke="#ff0000" stroke-width="1.2"/>
<path d="M369.50 385.40 C371.65 385.40 371.65 382.60 373.80 382.60 C375.95 382.60 375.95 385.40 378.10 385.40 C380.25 385.40 380.25 382.60 382.40 382.60 C384.55 382.60 384.55 385.40 386.70 385.40 C388.85 385.40 388.85 382.60 391.00 382.60 C393.15 382.60 393.15 385.40 395.30 385.40 C397.45 385.40 397.45 382.60 399.60 382.60 C401.75 382.60 401.75 385.40 403.90 385.40 C406.05 385.40 406.05 382.60 408.20 382.60 C410.35 382.60 410.35 385.40 412.50 385.40 C414.65 385.40 414.65 382.60 416.80 382.60 C418.95 382.60 418.95 385.40 421.10 385.40 C421.47 385.40 421.47 384.92 421.84 384.92" fill="none" stroke="#ff0000" stroke-width="1.2"/>
<path d="M885.50 164.40 C887.65 164.40 887.65 161.60 889.80 161.60 C891.95 161.60 891.95 164.40 894.10 164.40 C896.25 164.40 896.25 161.60 898.40 161.60 C900.55 161.60 900.55 164.40 902.70 164.40 C904.85 164.40 904.85 161.60 907.00 161.60 C909.15 161.60 909.15 164.40 911.30 164.40 C913.45 164.40 913.45 161.60 915.60 161.60 C917.75 161.60 917.75 164.40 919.90 164.40 C922.05 164.40 922.05 161.60 924.20 161.60 C926.35 161.60 926.35 164.40 928.50 164.40 C930.65 164.40 930.65 161.60 932.80 161.60 C934.95 161.60 934.95 164.40 937.10 164.40 C939.25 164.40 939.25 161.60 941.40 161.60 C943.55 161.60 943.55 164.40 945.70 164.40 C947.85 164.40 947.85 161.60 950.00 161.60 C952.15 161.60 952.15 164.40 954.30 164.40 C956.45 164.40 956.45 161.60 958.60 161.60 C959.17 161.60 959.17 162.34 959.73 162.34" fill="none" stroke="#ff0000" stroke-width="1.2"/>
</svg>
<svg class="a" style="left:0;top:0" width="890" height="401">
<g id="tb1" stroke-linecap="butt">
<!-- new spreadsheet -->
<path d="M8.7 51.7H15.8L21.3 57.2V66.3H8.7Z" fill="#fafafa" stroke="#22a04b" stroke-width="1.4"/>
<path d="M17.8 51H22V55.2Z" fill="#22a04b"/>
<rect x="10.9" y="56.9" width="7.2" height="6.9" fill="#22a04b"/>
<path d="M11.9 58.5H14M15 58.5H17.1M11.9 60.4H14M15 60.4H17.1M11.9 62.3H14M15 62.3H17.1" stroke="#fff" stroke-width="1.1"/>
<path d="M28 59H35L31.5 63Z" fill="#000"/>
<!-- open -->
<path d="M41.6 64.5V52.6H45.2L47.2 54.6H53.4V57.6" fill="#fff" stroke="#f0892d" stroke-width="1.2"/>
<path d="M41.6 64.6L44.6 57.6H56.5L53.4 64.6Z" fill="#f9d98b" stroke="#f0892d" stroke-width="1.2" stroke-linejoin="round"/>
<path d="M62 59H69L65.5 63Z" fill="#000"/>
<!-- save -->
<rect x="75.9" y="51.9" width="14.2" height="14.2" fill="#dca8df" stroke="#8f2d9c" stroke-width="1.8"/>
<rect x="77.2" y="53" width="11.6" height="4.8" fill="#f7f7f7"/>
<rect x="76.5" y="57.8" width="13" height="1.4" fill="#8f2d9c"/>
<rect x="78.6" y="61" width="8.8" height="5" fill="#f7f7f7"/>
<rect x="80.2" y="62" width="1.8" height="4.5" fill="#8f2d9c"/>
<path d="M96 59H103L99.5 63Z" fill="#000"/>
<rect x="109" y="53" width="1" height="13" fill="#a0a0a0"/>
<!-- pdf -->
<path d="M120.6 51.6H128.4L132.4 55.6V66.4H120.6Z" fill="#f8f8f8" stroke="#333" stroke-width="1.2" stroke-linejoin="round"/>
<path d="M128.4 51.6V55.6H132.4" fill="#fff" stroke="#333" stroke-width="1"/>
<path d="M125.8 57.8V62.5M125.8 62.5L124.2 66.8M125.8 62.5L133.8 64.8" fill="none" stroke="#e8484c" stroke-width="1.4"/>
<!-- print -->
<rect x="144.6" y="51.6" width="9" height="4.4" fill="#fafafa" stroke="#333" stroke-width="1.2"/>
<rect x="141.6" y="56.1" width="15" height="5.8" rx="0.8" fill="#6c6c6c" stroke="#333" stroke-width="1.2"/>
<rect x="153.5" y="58.5" width="2" height="1" fill="#fff"/>
<rect x="144.6" y="61" width="9" height="5.4" fill="#fafafa" stroke="#333" stroke-width="1.2"/>
<!-- preview -->
<path d="M166.6 51.6H177.4V66.4H166.6Z" fill="#f8f8f8" stroke="#333" stroke-width="1.2"/>
<circle cx="174.3" cy="61.6" r="2.9" fill="#fff" stroke="#1e8bcd" stroke-width="1.3"/>
<path d="M176.4 63.8L179.6 67" stroke="#1e8bcd" stroke-width="1.5"/>
<rect x="186" y="53" width="1" height="13" fill="#a0a0a0"/>
<!-- cut -->
<path d="M197.8 51L206.2 62.3M207.8 51L199.4 62.3" stroke="#333" stroke-width="1.2"/>
<circle cx="198.6" cy="64.5" r="2.3" fill="none" stroke="#1e8bcd" stroke-width="1.3"/>
<circle cx="207.4" cy="64.5" r="2.3" fill="none" stroke="#1e8bcd" stroke-width="1.3"/>
<!-- copy -->
<path d="M219.6 51.6H225.5L227 53.1V63.4H219.6Z" fill="#fafafa" stroke="#333" stroke-width="1.2"/>
<path d="M221.2 56.5v0.8M221.2 59.5v0.8" stroke="#1e8bcd" stroke-width="1.2"/>
<path d="M223.6 55.6H229.6L232.4 58.4V66.4H223.6Z" fill="#fff" stroke="#333" stroke-width="1.2" stroke-linejoin="round"/>
<path d="M229.6 55.6V58.4H232.4" fill="none" stroke="#333" stroke-width="1"/>
<path d="M225.5 60.6h5M225.5 63.4h5" stroke="#1e8bcd" stroke-width="1.2"/>
<!-- paste -->
<path d="M244 53.2H241.8V66.2H247.5" fill="none" stroke="#f0892d" stroke-width="1.6"/>
<path d="M251.5 53.2H254.2V58" fill="none" stroke="#f0892d" stroke-width="1.4"/>
<rect x="243.8" y="53" width="8" height="2.4" fill="#fff" stroke="#333" stroke-width="1.1"/>
<circle cx="247.8" cy="52.2" r="1.2" fill="none" stroke="#333" stroke-width="1"/>
<path d="M248.6 58.6H253.4L256.4 61.6V66.4H248.6Z" fill="#fff" stroke="#333" stroke-width="1.2" stroke-linejoin="round"/>
<path d="M253.4 58.6V61.6H256.4" fill="none" stroke="#333" stroke-width="1"/>
<path d="M261 59H268L264.5 63Z" fill="#000"/>
<rect x="274" y="53" width="1" height="13" fill="#a0a0a0"/>
<!-- clone formatting -->
<defs><linearGradient id="brg" x1="0" y1="0" x2="0" y2="1"><stop offset="0.45" stop-color="#ffffff"/><stop offset="0.55" stop-color="#fbe3a4"/></linearGradient></defs>
<path d="M297.6 51.6L293.2 58" stroke="#333" stroke-width="1.5" stroke-linecap="round"/>
<path d="M287.4 58.6L294 62.4L293.6 66.5H286.2C284.9 65.2 285.2 61.6 287.4 58.6Z" fill="url(#brg)" stroke="#f0892d" stroke-width="1.2" stroke-linejoin="round"/>
<path d="M289 56.4L295.8 61.4" stroke="#333" stroke-width="2" stroke-linecap="round"/>
<!-- clear formatting -->
<path d="M306.5 66L313.6 51.4L315.8 58.5M309.8 60.8H313" fill="none" stroke="#333" stroke-width="1.2"/>
<path d="M306 66.6H312.6" stroke="#333" stroke-width="0.9"/>
<path d="M312.3 63.6L318.8 57.2L322.4 60.8L315.9 67.2Z" fill="#dd2b22"/>
<path d="M316.4 61.2L319.2 58.6L320.6 60L317.8 62.6Z" fill="#f5a0a0"/>
<rect x="328" y="53" width="1" height="13" fill="#a0a0a0"/>
<!-- undo -->
<path d="M336.8 55.6H346.8A5.4 5.4 0 0 1 346.8 66.4" fill="none" stroke="#b8b8b8" stroke-width="1.1"/>
<path d="M341.6 51L336.8 55.6L341.6 60.2" fill="none" stroke="#b8b8b8" stroke-width="1.1"/>
<path d="M357 59H364L360.5 63Z" fill="#6a6a6a"/>
<!-- redo -->
<path d="M385.2 55.6H375.2A5.4 5.4 0 0 0 375.2 66.4" fill="none" stroke="#b8b8b8" stroke-width="1.1"/>
<path d="M380.4 51L385.2 55.6L380.4 60.2" fill="none" stroke="#b8b8b8" stroke-width="1.1"/>
<path d="M391 59H398L394.5 63Z" fill="#6a6a6a"/>
<rect x="404" y="53" width="1" height="13" fill="#a0a0a0"/>
<!-- find replace -->
<path d="M428.1 57.2A5 5 0 1 0 422.3 61.3" fill="#f4f4f4" stroke="#333" stroke-width="1.1"/>
<path d="M419.4 60.4L413.2 66.6" stroke="#333" stroke-width="1.2"/>
<text x="419.6" y="59.8" font-size="12" fill="#1e8bcd" font-family="Liberation Sans">a</text>
<text x="422.4" y="66.8" font-size="12" fill="#333" font-family="Liberation Sans">d</text>
<!-- spelling -->
<text x="436.6" y="60.3" font-size="12.3" fill="#3a3a3a" font-family="Liberation Sans">ab</text>
<path d="M442 63.2L445.6 66.4L451.8 60" fill="none" stroke="#2aa55a" stroke-width="1.3"/>
<rect x="458" y="53" width="1" height="13" fill="#a0a0a0"/>
<!-- rows -->
<rect x="466.6" y="51.6" width="14.8" height="14.8" fill="#fff" stroke="#333" stroke-width="1.2"/>
<rect x="467" y="56.6" width="14" height="4.8" fill="#8cc1ea"/>
<path d="M471.5 51.6V66.4M476.5 51.6V66.4" stroke="#333" stroke-width="1"/>
<path d="M471.5 56.6V61.4M476.5 56.6V61.4" stroke="#4a9ad8" stroke-width="1"/>
<path d="M466.6 56.6H481.4M466.6 61.4H481.4" stroke="#1e7fcf" stroke-width="1.2"/>
<path d="M487 59H494L490.5 63Z" fill="#000"/>
<!-- columns -->
<rect x="500.6" y="51.6" width="14.8" height="14.8" fill="#fff" stroke="#333" stroke-width="1.2"/>
<rect x="505.6" y="52" width="4.8" height="14" fill="#8cc1ea"/>
<path d="M500.6 56.6H515.4M500.6 61.4H515.4" stroke="#333" stroke-width="1"/>
<path d="M505.6 56.6H510.4M505.6 61.4H510.4" stroke="#4a9ad8" stroke-width="1"/>
<path d="M505.6 51.6V66.4M510.4 51.6V66.4" stroke="#1e7fcf" stroke-width="1.2"/>
<path d="M521 59H528L524.5 63Z" fill="#000"/>
<rect x="534" y="53" width="1" height="13" fill="#a0a0a0"/>
<!-- sort dialog -->
<rect x="543.6" y="51.6" width="14.8" height="14.8" fill="#fff" stroke="#333" stroke-width="1.2"/>
<rect x="543.6" y="51.6" width="14.8" height="1.8" fill="#555"/>
<path d="M545 65.2L548.3 55.4L551.6 65.2M546.2 62H550.4" fill="none" stroke="#1e8bcd" stroke-width="1.3"/>
<path d="M551.6 59.4H556L551.6 64.6H556.4" fill="none" stroke="#a83ab5" stroke-width="1.3"/>
<!-- sort asc -->
<path d="M566.4 58L569 51.2L571.6 58M567.2 55.8H570.8" fill="none" stroke="#1e8bcd" stroke-width="1.2"/>
<path d="M566.4 60.2H571.4L566.4 66.2H571.6" fill="none" stroke="#a83ab5" stroke-width="1.2"/>
<path d="M577.6 51V66.4M573.2 62L577.6 66.6L582 62" fill="none" stroke="#333" stroke-width="1.1"/>
<!-- sort desc -->
<path d="M589.4 51.6H594.4L589.4 57.6H594.6" fill="none" stroke="#a83ab5" stroke-width="1.2"/>
<path d="M589.4 66.4L592 59.6L594.6 66.4M590.2 64.2H593.8" fill="none" stroke="#1e8bcd" stroke-width="1.2"/>
<path d="M600.6 51V66.4M596.2 62L600.6 66.6L605 62" fill="none" stroke="#333" stroke-width="1.1"/>
<!-- autofilter -->
<path d="M612.6 51.6H627.4V52.6L622 58.4M612.6 51.6V52.6L619.8 60.4V66" fill="#fff" stroke="#333" stroke-width="1.2" stroke-linejoin="round"/>
<path d="M613 52.4H627L621 58.6H619.6Z" fill="#fff"/>
<path d="M626.8 58L621.6 62.6H625.2L619.8 67.2" fill="none" stroke="#f0892d" stroke-width="1.7" stroke-linejoin="round"/>
<rect x="634" y="53" width="1" height="13" fill="#a0a0a0"/>
<!-- image -->
<rect x="643.6" y="51.6" width="14.8" height="14.8" fill="#fff" stroke="#333" stroke-width="1.2"/>
<circle cx="647" cy="56" r="1.5" fill="#fbd07a" stroke="#f0892d" stroke-width="0.9"/>
<path d="M644.2 65.8L648 61.6L649.6 62.8L654 58.2L657.8 61.6V65.8Z" fill="#8ec3ea" stroke="#1e8bcd" stroke-width="1"/>
<!-- chart -->
<rect x="667.6" y="56.6" width="3" height="9.8" fill="#9dcbeb" stroke="#1e72c6" stroke-width="1.2"/>
<rect x="672.6" y="51.6" width="3" height="14.8" fill="#fbe3a4" stroke="#f0892d" stroke-width="1.2"/>
<rect x="677.6" y="60.6" width="3" height="5.8" fill="#666" stroke="#444" stroke-width="1.2"/>
<!-- pivot -->
<rect x="689.6" y="51.6" width="2.2" height="2" fill="#fff" stroke="#333" stroke-width="1.1"/>
<rect x="689.6" y="56.2" width="2.2" height="10.2" fill="#fff" stroke="#333" stroke-width="1.1"/>
<rect x="694.4" y="51.6" width="10.8" height="2" fill="#fff" stroke="#333" stroke-width="1.1"/>
<path d="M701.6 54.8V60.6Q701.6 63.2 699 63.2H692.6M698.4 58L701.6 54.8L704.8 58M695.6 60L692.4 63.2L695.6 66.4" fill="none" stroke="#1e8bcd" stroke-width="1.2"/>
<rect x="711" y="53" width="1" height="13" fill="#a0a0a0"/>
<!-- omega -->
<path d="M718.6 66.2H723.6V64.6C720.6 63 719.4 60.6 719.4 58.2C719.4 53.8 722.4 51.4 726.6 51.4C730.8 51.4 733.8 53.8 733.8 58.2C733.8 60.6 732.6 63 729.6 64.6V66.2H734.6" fill="none" stroke="#333" stroke-width="1.2"/>
<path d="M740 59H747L743.5 63Z" fill="#000"/>
<!-- hyperlink -->
<path d="M754.6 60.4C754.6 55.6 758 52.4 761.8 52.4C765.6 52.4 769 55.6 769 60.4Z" fill="#fafafa" stroke="#333" stroke-width="1.2"/>
<path d="M754.8 57H768.8M754.6 60.4H769" stroke="#333" stroke-width="1.1"/>
<path d="M760.6 52.6C759.6 54.8 759.6 57.6 759.8 60.4M763 52.6C764 54.8 764 57.6 763.8 60.4" fill="none" stroke="#333" stroke-width="1.1"/>
<path d="M762.4 62.3H758.8Q757.2 62.3 757.2 64.5Q757.2 66.7 758.8 66.7H762.4M763.8 62.3H767.8Q769.6 62.3 769.6 64.5Q769.6 66.7 767.8 66.7H763.8M760.2 64.5H766.6" fill="none" stroke="#1e8bcd" stroke-width="1.3"/>
<!-- comment -->
<path d="M777.6 51.6H792.4V62.4H785.4L781.2 66.4V62.4H777.6Z" fill="#fff" stroke="#333" stroke-width="1.2" stroke-linejoin="round"/>
<!-- header footer -->
<path d="M802.6 51.6H810.4L813.4 54.6V66.4H802.6Z" fill="#fff" stroke="#333" stroke-width="1.2" stroke-linejoin="round"/>
<path d="M810.4 51.6V54.6H813.4" fill="none" stroke="#333" stroke-width="1"/>
<rect x="804.6" y="53.4" width="3" height="1.8" fill="#fbe3a4" stroke="#f0892d" stroke-width="1"/>
<rect x="804.6" y="61.6" width="7" height="1.8" fill="#fbe3a4" stroke="#f0892d" stroke-width="1"/>
<rect x="822" y="53" width="1" height="13" fill="#a0a0a0"/>
<!-- print area -->
<rect x="831.6" y="53.6" width="14.8" height="12.4" fill="#fff" stroke="#333" stroke-width="1.2"/>
<path d="M836.8 53.6V66M831.6 56.8H846.4M831.6 60H846.4M831.6 63.2H838" stroke="#333" stroke-width="1"/>
<rect x="831.2" y="53.2" width="11" height="7" fill="#1f73c9"/>
<rect x="832.6" y="54.4" width="3.6" height="1.8" fill="#a9b6c6"/>
<rect x="837.6" y="54.4" width="3.6" height="1.8" fill="#a9b6c6"/>
<rect x="832.6" y="57.4" width="3.6" height="1.8" fill="#a9b6c6"/>
<rect x="837.6" y="57.4" width="3.6" height="1.8" fill="#a9b6c6"/>
<rect x="838" y="59.4" width="9.4" height="8" fill="#e2e2e2"/>
<rect x="840.4" y="59.8" width="5" height="3" fill="#fff" stroke="#333" stroke-width="1"/>
<rect x="840" y="62.4" width="5.8" height="1" fill="#1e8bcd"/>
<path d="M838.8 62.6V65.6H846.4V62.6" fill="none" stroke="#333" stroke-width="1.1"/>
<rect x="840.4" y="64.8" width="5" height="2" fill="#fff" stroke="#333" stroke-width="1"/>
<!-- freeze -->
<rect x="853.6" y="52.4" width="15" height="14" fill="#fff" stroke="#333" stroke-width="1.2"/>
<path d="M853 51.8H869.2V57H859V67H853Z" fill="#1b6fc8"/>
<path d="M859 61.9H868.6M863.9 57V66.4" stroke="#555" stroke-width="1.1"/>
<rect x="860" y="53" width="3" height="3" fill="#8cc1ea"/><rect x="864.8" y="53" width="3.2" height="3" fill="#8cc1ea"/>
<rect x="854.2" y="58.6" width="3.6" height="3" fill="#8cc1ea"/><rect x="854.2" y="63" width="3.6" height="3" fill="#8cc1ea"/>
<path d="M860.4 55.6L862.6 53.4M865.2 55.6L867.6 53.4M854.6 61.2L857.4 59M854.6 65.6L857.4 63.4" stroke="#1b6fc8" stroke-width="0.8"/>
<circle cx="856.6" cy="54.4" r="3.8" fill="#e8f2fb"/>
<path d="M852.8 54.4H860.4M856.6 50.6V58.2M854 51.8L859.2 57M859.2 51.8L854 57" stroke="#2e8fdc" stroke-width="1.3"/>
<circle cx="856.6" cy="54.4" r="1" fill="#fff"/>
<path d="M874 59H881L877.5 63Z" fill="#000"/>
<rect x="888" y="51" width="2" height="16" fill="#333"/>
<rect x="886" y="58.5" width="4" height="1.2" fill="#1e8bcd"/>
</g>
<g id="tb2">
<rect x="220" y="81" width="1" height="13" fill="#a0a0a0"/>
<path fill-rule="evenodd" fill="#333" d="M232 80H237.8C240.6 80 242 81.5 242 83.5C242 85 241.2 86.2 239.8 86.7C241.6 87.1 242.6 88.5 242.6 90.2C242.6 92.5 241 94 237.8 94H232ZM235.2 82.6V85.7H237.3C238.4 85.7 239 85.1 239 84.1C239 83.1 238.4 82.6 237.3 82.6ZM235.2 88.1V91.4H237.7C238.9 91.4 239.5 90.8 239.5 89.7C239.5 88.7 238.9 88.1 237.7 88.1Z"/>
<path d="M258.6 80.7H263.8M256.6 93.3H261.8M261.6 80.7L258.8 93.3" stroke="#333" stroke-width="1.3" fill="none"/>
<path d="M278.6 79.8V88.2A3.9 3.9 0 0 0 286.4 88.2V79.8" fill="none" stroke="#333" stroke-width="1.9"/>
<rect x="276" y="94" width="13" height="1.2" fill="#1e8bcd"/>
<rect x="297" y="81" width="1" height="13" fill="#a0a0a0"/>
<!-- font color -->
<path d="M307.8 91L313 79.8L318.2 91M309.8 86.8H316.2" fill="none" stroke="#333" stroke-width="1.6"/>
<rect x="305" y="91" width="16" height="4" fill="#d01f1f"/>
<path d="M326 87H333L329.5 91Z" fill="#000"/>
<!-- highlight -->
<path d="M340.2 90.6V84.4Q340.2 83.2 341.4 83.2H343.6" fill="none" stroke="#1e7fcf" stroke-width="1.8"/>
<path d="M341.6 90.6V85.6" stroke="#9cc9ee" stroke-width="1"/>
<path d="M345.2 88.6L344.6 85.4C344.4 84.2 346 84 346.4 85L347 86.4V80.8C347 79.2 349.6 79.2 349.6 80.8V84.2C351 83.8 352.6 84.2 352.8 85.6V88.4L351.4 90.6H346.6Z" fill="#fff" stroke="#555" stroke-width="1"/>
<rect x="339" y="91" width="16" height="4" fill="#f8f800"/>
<path d="M360 87H367L363.5 91Z" fill="#000"/>
<rect x="373" y="81" width="1" height="13" fill="#a0a0a0"/>
<!-- align -->
<g stroke="#333" stroke-width="1.2" stroke-linecap="round">
<path d="M383.6 81.5H396.6M383.6 83.8H391M383.6 86.5H396.6M383.6 88.8H391M383.6 91.5H396.6M383.6 93.8H391"/>
<path d="M406.6 81.5H419.6M409.6 83.8H416.6M406.6 86.5H419.6M409.6 88.8H416.6M406.6 91.5H419.6M409.6 93.8H416.6"/>
<path d="M429.4 81.5H442.4M435 83.8H442.4M429.4 86.5H442.4M435 88.8H442.4M429.4 91.5H442.4M435 93.8H442.4"/>
</g>
<rect x="450" y="81" width="1" height="13" fill="#a0a0a0"/>
<!-- wrap -->
<path d="M460.4 81.5H474M460.4 92.5H474" stroke="#333" stroke-width="1.2"/><path d="M460.4 84.2H463" stroke="#333" stroke-width="1.3"/>
<path d="M464 84.2H468.4Q471 84.2 471 86.8V89.2M468.2 86.8L471 89.6L473.8 86.8" fill="none" stroke="#1e8bcd" stroke-width="1.2"/>
<!-- merge gray -->
<rect x="482.6" y="79.6" width="14.8" height="14.8" fill="none" stroke="#b0b0b0" stroke-width="1.2"/>
<path d="M487.6 79.6V84.4M492.4 79.6V84.4M487.6 88.8V94.4M492.4 88.8V94.4M482.6 84.4H497.4M482.6 88.8H497.4" fill="none" stroke="#c8c8c8" stroke-width="1"/>
<path d="M483.8 86.6H488.6M491.4 86.6H496.2M486 84.4L483.8 86.6L486 88.8M494 84.4L496.2 86.6L494 88.8" fill="none" stroke="#a8a8a8" stroke-width="1.1"/>
<rect x="504" y="81" width="1" height="13" fill="#a0a0a0"/>
<!-- valign -->
<path d="M514.4 81.5H527.6M514.4 83.6H521.6" stroke="#333" stroke-width="1.2" stroke-linecap="round"/>
<path d="M520.6 95V86.2M517.2 89.4L520.6 86L524 89.4" fill="none" stroke="#1e8bcd" stroke-width="1.3"/>
<path d="M537.4 86.4H550.6M537.4 88.6H544.6" stroke="#333" stroke-width="1.2" stroke-linecap="round"/>
<path d="M543.6 79V84.6M540.6 81.6L543.6 84.6L546.6 81.6M543.6 95V89.6M540.6 92.6L543.6 89.6L546.6 92.6" fill="none" stroke="#1e8bcd" stroke-width="1.3"/>
<path d="M560.4 91.4H573.6M560.4 93.6H567.6" stroke="#333" stroke-width="1.2" stroke-linecap="round"/>
<path d="M566.6 79V88.2M563.2 85L566.6 88.4L570 85" fill="none" stroke="#1e8bcd" stroke-width="1.3"/>
<rect x="581" y="81" width="1" height="13" fill="#a0a0a0"/>
<!-- currency -->
<path d="M589.6 91.8V82.2H604.6V85" fill="none" stroke="#333" stroke-width="1.2"/>
<circle cx="597" cy="86.4" r="2.9" fill="#444"/>
<rect x="592.2" y="88.4" width="5.4" height="6.4" rx="1.6" fill="#eee" stroke="#333" stroke-width="1.1"/>
<rect x="599.2" y="88.4" width="5.4" height="6.4" rx="1.6" fill="#eee" stroke="#333" stroke-width="1.1"/>
<path d="M592.6 90.7h4.6M599.6 90.7h4.6M592.6 92.7h4.6M599.6 92.7h4.6" stroke="#333" stroke-width="0.9"/>
<path d="M610.4 86.6H617.4L613.9 90.6Z" fill="#000"/>
<!-- percent -->
<circle cx="628.6" cy="83.8" r="2.1" fill="none" stroke="#333" stroke-width="1.3"/>
<circle cx="635.8" cy="90.6" r="2.1" fill="none" stroke="#333" stroke-width="1.3"/>
<path d="M637.6 81.2L628.2 93.2" stroke="#333" stroke-width="1.2"/>
<!-- 0.0 -->
<ellipse cx="650.2" cy="87" rx="2.8" ry="6.5" fill="none" stroke="#444" stroke-width="1"/>
<ellipse cx="659.6" cy="87" rx="2.8" ry="6.5" fill="none" stroke="#444" stroke-width="1"/>
<rect x="654.4" y="93" width="1.6" height="1.6" fill="#222"/>
<!-- date -->
<rect x="670.6" y="81.6" width="14.8" height="12.8" fill="#e9e9e9" stroke="#333" stroke-width="1.2"/>
<path d="M670.6 83.6H685.4" stroke="#333" stroke-width="1"/>
<rect x="675" y="81.2" width="6" height="1.6" fill="#333"/>
<rect x="672.2" y="79.2" width="1.6" height="2.6" fill="#333"/>
<rect x="682.2" y="79.2" width="1.6" height="2.6" fill="#333"/>
<path d="M675.4 85.6H680.6L677.2 92.6" fill="none" stroke="#333" stroke-width="1.1"/>
<rect x="692" y="81" width="1" height="13" fill="#a0a0a0"/>
<!-- add decimal -->
<rect x="701.4" y="93" width="1.6" height="1.6" fill="#222"/>
<ellipse cx="706.6" cy="87" rx="2.6" ry="6.5" fill="none" stroke="#444" stroke-width="1"/>
<path d="M711 92V84C711 79 716.6 79 716.6 84V90.5" fill="none" stroke="#444" stroke-width="1"/>
<path d="M713.6 88.4V95M710.2 91.8H717" stroke="#1e8bcd" stroke-width="1.3"/>
<!-- delete decimal -->
<rect x="724.4" y="93" width="1.6" height="1.6" fill="#222"/>
<ellipse cx="729.6" cy="87" rx="2.6" ry="6.5" fill="none" stroke="#444" stroke-width="1"/>
<path d="M734 89V84C734 79 739.6 79 739.6 84V87" fill="none" stroke="#444" stroke-width="1"/>
<path d="M733.4 88.4L740 95M740 88.4L733.4 95" stroke="#ee4b4b" stroke-width="1.2"/>
<rect x="746" y="81" width="1" height="13" fill="#a0a0a0"/>
<!-- indent -->
<g stroke="#333" stroke-width="1.2" stroke-linecap="round">
<path d="M757.4 81.5H769.6M763.4 85.6H769.6M763.4 89.5H769.6M757.4 93.5H769.6"/>
<path d="M780.4 81.5H792.6M786.4 85.6H792.6M786.4 89.5H792.6M780.4 93.5H792.6"/>
</g>
<path d="M755 86.6H761.8M758.6 83.2L762 86.6L758.6 90" fill="none" stroke="#1e8bcd" stroke-width="1.3"/>
<path d="M785 86.6H778.2M781.4 83.2L778 86.6L781.4 90" fill="none" stroke="#1e8bcd" stroke-width="1.3"/>
<rect x="800" y="81" width="1" height="13" fill="#a0a0a0"/>
<!-- borders -->
<rect x="808.6" y="80.6" width="14" height="13.8" fill="#f6f6f6" stroke="#333" stroke-width="1.2"/>
<path d="M815.6 80.6V94.4M808.6 87.5H822.6" stroke="#444" stroke-width="1"/>
<rect x="808" y="94.2" width="15" height="1.1" fill="#f0892d"/>
<path d="M829 87H836L832.5 91Z" fill="#000"/>
<!-- border style -->
<g stroke="#333" stroke-linecap="round">
<path d="M843 80.5H857" stroke-width="2.1"/>
<path d="M843 84H857" stroke-width="1.9"/>
<path d="M843 87.6H845M848 87.6H854M856.6 87.6H857" stroke-width="1.2"/>
<path d="M843.4 90.6H844.6M847.6 90.6H848.8M851.6 90.6H852.8M855.6 90.6H856.8" stroke-width="1.2"/>
<path d="M843 93.8H857" stroke-width="2"/>
</g>
<path d="M863 87H870L866.5 91Z" fill="#000"/>
<!-- border color partial -->
<rect x="876" y="79" width="14" height="16" fill="#2b5e9e"/>
<rect x="877" y="80" width="13" height="11" fill="#fff"/>
<rect x="878.6" y="81.6" width="12" height="7.8" fill="#e4e4e4" stroke="#2a2a2a" stroke-width="1.2"/>
</g>
<g id="fb">
<rect x="146" y="109" width="1" height="14" fill="#a0a0a0"/>
<path d="M166 108.8C164.2 107.9 162.4 108.6 161.8 110.6L158.8 121.4C158.3 123.2 157 123.8 155.4 123" fill="none" stroke="#1e8bcd" stroke-width="1.5"/>
<path d="M158.6 113.4H164" stroke="#1e8bcd" stroke-width="1.3"/>
<path d="M161.6 114C163.2 113.6 164.2 114.4 165 116.2L167.4 121.6C168 123 169 123.4 170.4 122.8M170.2 114.4C168.6 114.2 166.6 116 165.6 117.6L163.2 121.4C162.4 122.8 161.6 123.4 160.6 123" fill="none" stroke="#1e8bcd" stroke-width="1.4"/>
<path d="M190.6 111V108.8H179.4L185.4 116L179.4 123.2H190.8V121" fill="none" stroke="#444" stroke-width="1.1"/>
<path d="M198 115.4H205L201.5 119.6Z" fill="#000"/>
<path d="M214 113.2H226M214 119.6H226" stroke="#333" stroke-width="2.2"/>
</g>
<g id="title">
<path d="M6.8 5.8H13.8L19.6 11.6V20.1H6.8Z" fill="#ececec" stroke="#22a04b" stroke-width="1.5"/>
<path d="M15.6 5H20.4V9.8Z" fill="#22a04b"/>
<rect x="8.7" y="10.8" width="7.4" height="7.4" fill="#22a04b"/>
<path d="M9.7 12.4H12M13.1 12.4H15.2M9.7 14.5H12M13.1 14.5H15.2M9.7 16.6H12M13.1 16.6H15.2" stroke="#fff" stroke-width="1.2"/>
</g>

</svg>
</body></html>
